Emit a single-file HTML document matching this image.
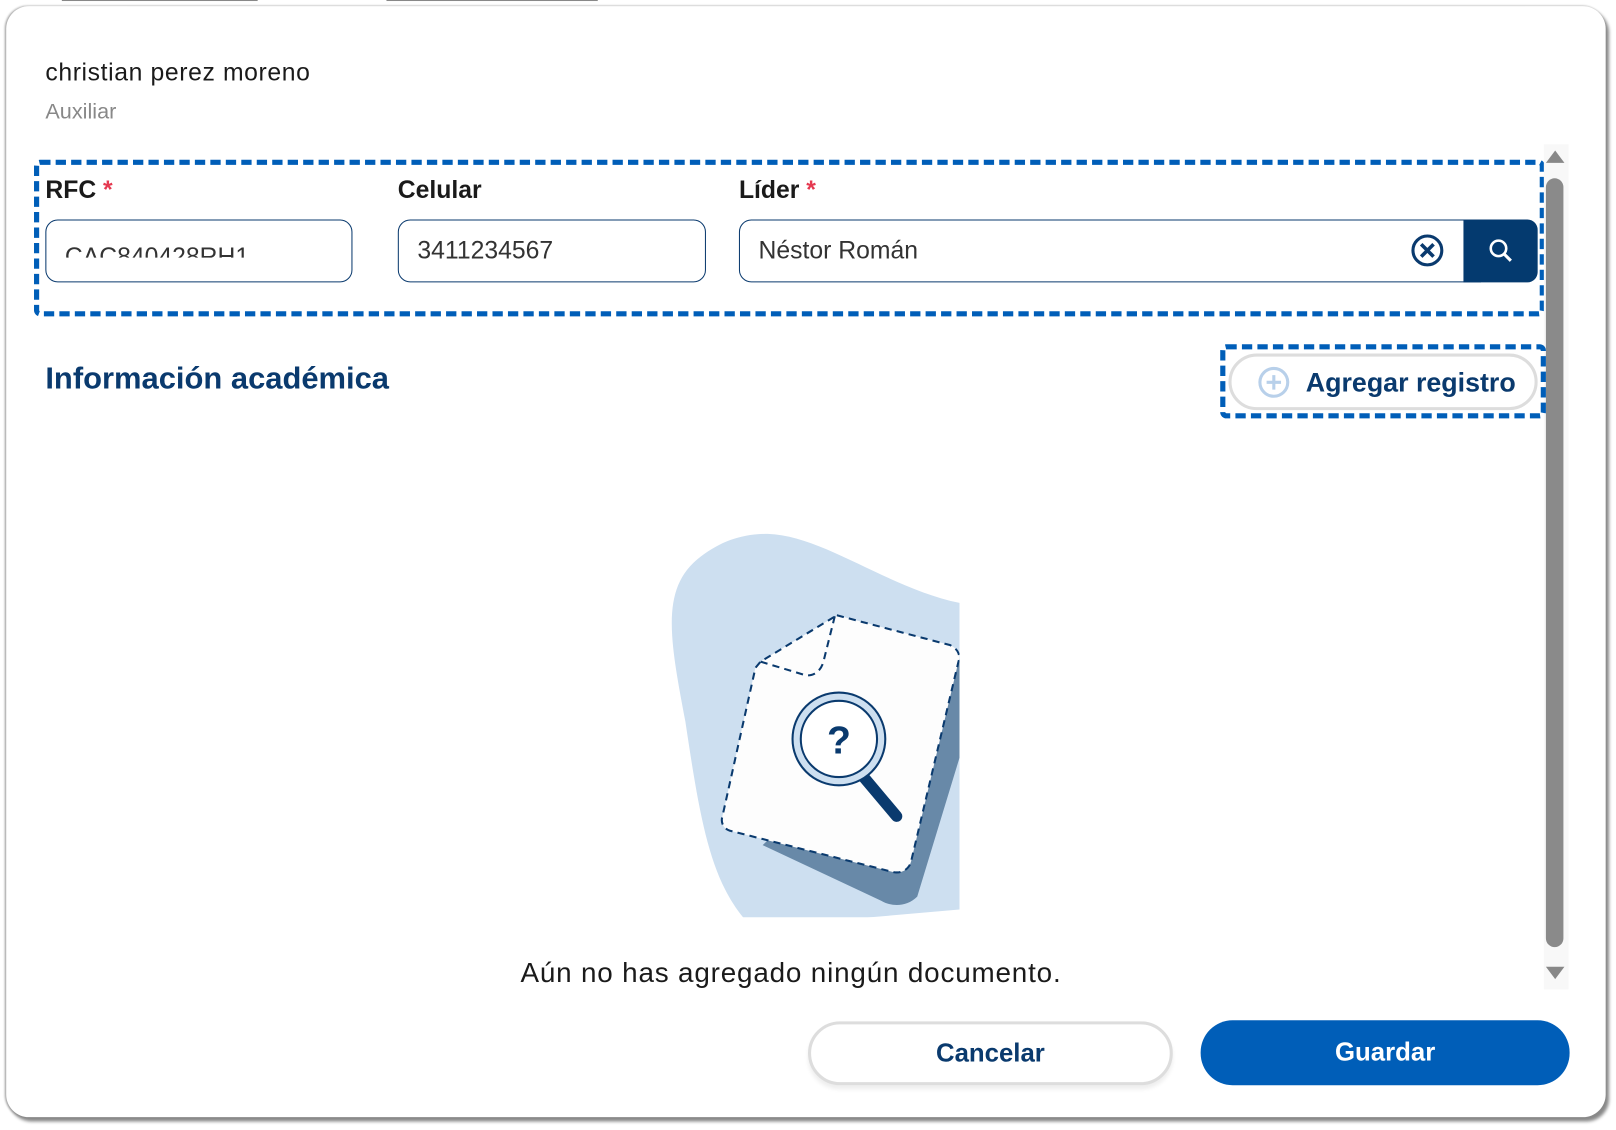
<!DOCTYPE html>
<html><head><meta charset="utf-8"><style>
*{box-sizing:border-box;margin:0;padding:0}
body{width:1616px;height:1129px;background:#fff;position:relative;overflow:hidden;font-family:"Liberation Sans",sans-serif}
#w{position:absolute;left:0;top:0;width:1568px;height:1096px;transform:scale(1.0306);transform-origin:0 0}
.a{position:absolute}
.card{left:6px;top:6px;width:1552px;height:1078px;background:#fff;border-radius:22px;box-shadow:3px 4px 3px #888, -1px 0 2px #999}
.lbl{font-size:24px;font-weight:bold;color:#1a1a1a}
.inp{border:1.5px solid #0a3a6e;border-radius:12px;height:61px;font-size:24px;color:#333;padding:16px 0 0 18px}
.dash{border:5px dashed #005EB8;border-radius:6px}
</style></head><body><div id="w">
<div class="a" style="left:60px;top:0;width:190px;height:3px;border-top:1px solid #888"></div>
<div class="a" style="left:375px;top:0;width:205px;height:3px;border-top:1px solid #888"></div>
<div class="a card"></div>
<div class="a" style="left:44px;top:57px;font-size:24px;color:#1a1a1a;letter-spacing:0.6px">christian perez moreno</div>
<div class="a" style="left:44px;top:97px;font-size:21px;color:#888">Auxiliar</div>

<div class="a dash" style="left:33px;top:155px;width:1466px;height:152px"></div>
<div class="a lbl" style="left:44px;top:171px">RFC <span style="color:#e53950">*</span></div>
<div class="a lbl" style="left:386px;top:171px">Celular</div>
<div class="a lbl" style="left:717px;top:171px">Líder <span style="color:#e53950">*</span></div>
<div class="a inp" style="left:44px;top:213px;width:298px;overflow:hidden"><div style="margin-top:6px;height:14px;overflow:hidden;color:#333">CAC840428RH1</div></div>
<div class="a inp" style="left:386px;top:213px;width:299px">3411234567</div>
<div class="a inp" style="left:717px;top:213px;width:720px;border-radius:12px 0 0 12px">Néstor Román</div>
<svg class="a" style="left:1368px;top:226px" width="34" height="34" viewBox="0 0 34 34"><circle cx="17" cy="17" r="14" fill="none" stroke="#0a3a6e" stroke-width="3"/><path d="M11 11L23 23M23 11L11 23" stroke="#0a3a6e" stroke-width="3.5"/></svg>
<div class="a" style="left:1420px;top:213px;width:72px;height:61px;background:#043a6f;border-radius:0 10px 10px 0"></div>
<svg class="a" style="left:1442px;top:229px" width="30" height="30" viewBox="0 0 30 30"><circle cx="12" cy="12" r="7.5" fill="none" stroke="#fff" stroke-width="2.5"/><path d="M17.5 17.5L24 24" stroke="#fff" stroke-width="3"/></svg>

<div class="a" style="left:1498px;top:140px;width:24px;height:820px;background:#f8f8f8"></div>
<div class="a" style="left:1500px;top:146px;width:0;height:0;border-left:9px solid transparent;border-right:9px solid transparent;border-bottom:12px solid #888"></div>
<div class="a" style="left:1500px;top:173px;width:17px;height:746px;background:#8a8a8a;border-radius:9px"></div>
<div class="a" style="left:1500px;top:938px;width:0;height:0;border-left:9px solid transparent;border-right:9px solid transparent;border-top:12px solid #888"></div>

<div class="a" style="left:44px;top:351px;font-size:30px;font-weight:bold;color:#0a3a6e">Información académica</div>
<div class="a dash" style="left:1184px;top:334px;width:316px;height:72px"></div>
<div class="a" style="left:1192px;top:343px;width:300px;height:55px;border:3px solid #ddd;border-radius:28px;background:#fff"></div>
<svg class="a" style="left:1220px;top:355px" width="32" height="32" viewBox="0 0 32 32"><circle cx="16" cy="16" r="13.5" fill="none" stroke="#b8d0ea" stroke-width="3"/><path d="M16 9V23M9 16H23" stroke="#b8d0ea" stroke-width="3"/></svg>
<div class="a" style="left:1267px;top:356px;font-size:26px;font-weight:bold;color:#0a3a6e">Agregar registro</div>

<svg class="a" style="left:0;top:0" width="1568" height="1096">
<defs><clipPath id="c"><rect x="600" y="500" width="331" height="390"/></clipPath></defs>
<g clip-path="url(#c)">
<path d="M745 518C800 520 860 570 931 585L960 880L730 900C690 860 680 800 665 700C650 620 640 570 680 540C700 525 720 518 745 518Z" fill="#cddff0"/>
<path d="M930 640L960 640L890 870C880 880 865 880 855 874L740 820Z" fill="#6889a8"/>
<path d="M812 597L922 626C930 630 932 636 930 642L884 836C882 844 874 848 866 846L708 806C702 804 699 798 701 792L733 648L738 642Z" fill="#fdfdfd" stroke="#0a3a6e" stroke-width="2" stroke-dasharray="7 5"/>
<path d="M738 642L781 655C790 657 797 650 799 642L810 598" fill="none" stroke="#0a3a6e" stroke-width="2" stroke-dasharray="7 5"/>
<path d="M838 754L870 792" stroke="#0a3a6e" stroke-width="11" stroke-linecap="round"/>
<circle cx="814" cy="717" r="45" fill="#cddff0" stroke="#0a3a6e" stroke-width="2"/>
<circle cx="814" cy="717" r="37" fill="#fff" stroke="#0a3a6e" stroke-width="2"/>
<text x="814" y="731" text-anchor="middle" font-family="Liberation Sans" font-weight="bold" font-size="38" fill="#0a3a6e">?</text>
</g></svg>

<div class="a" style="left:505px;top:929px;font-size:27px;color:#1a1a1a;letter-spacing:0.8px">Aún no has agregado ningún documento.</div>
<div class="a" style="left:784px;top:991px;width:354px;height:62px;border:3px solid #ddd;border-radius:31px;box-shadow:0 4px 4px #eee;text-align:center;line-height:56px;font-size:25px;font-weight:bold;color:#0a3a6e">Cancelar</div>
<div class="a" style="left:1165px;top:990px;width:358px;height:63px;background:#005EB8;border-radius:31px;text-align:center;line-height:63px;font-size:25px;font-weight:bold;color:#fff">Guardar</div>
</div></body></html>
